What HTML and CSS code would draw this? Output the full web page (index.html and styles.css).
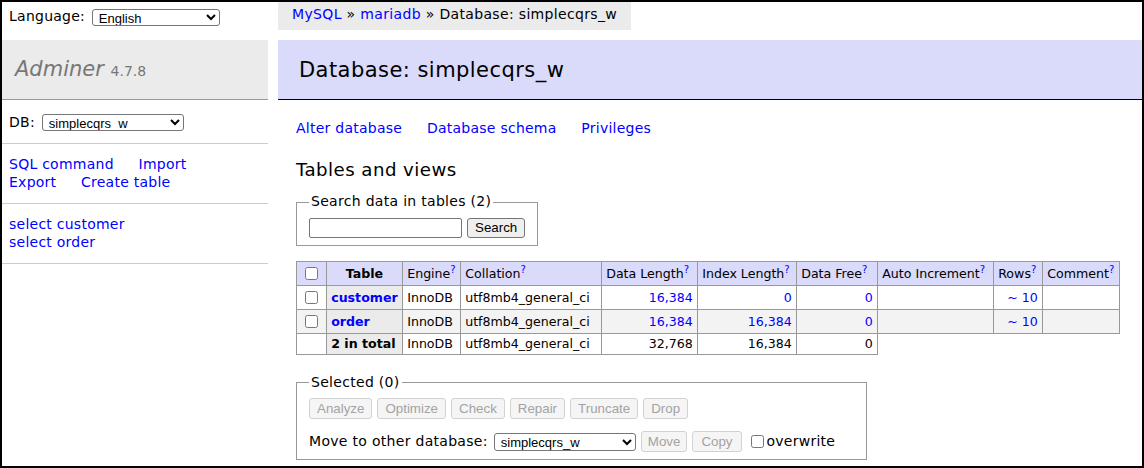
FILE: index.html
```html
<!DOCTYPE html>
<html lang="en">
<head>
<meta charset="utf-8">
<title>Database: simplecqrs_w - Adminer</title>
<link rel="stylesheet" href="styles.css">
</head>
<body>
<div class="frame">
  <aside class="menu">
    <div class="lang">Language: <select class="sel sel-lang"><option>English</option></select></div>
    <h1 class="logo"><a class="logo-name" href="#">Adminer</a> <span class="version">4.7.8</span></h1>
    <p class="menu-block dbpick">DB: <select class="sel sel-db"><option>simplecqrs_w</option></select></p>
    <p class="menu-block menu-links"><a href="#">SQL command</a> <a href="#">Import</a><br><a href="#">Export</a> <a href="#">Create table</a></p>
    <p class="menu-block menu-tables"><a href="#">select customer</a><br><a href="#">select order</a></p>
  </aside>
  <main class="main">
    <div class="breadcrumb"><a href="#">MySQL</a> » <a href="#">mariadb</a> » Database: simplecqrs_w</div>
    <h2 class="title">Database: simplecqrs_w</h2>
    <div class="content">
      <p class="links"><a href="#">Alter database</a> <a href="#">Database schema</a> <a href="#">Privileges</a></p>
      <h3 class="subtitle">Tables and views</h3>
      <fieldset class="box search">
        <legend>Search data in tables (2)</legend>
        <div class="row"><input class="txt" type="text"><button class="btn">Search</button></div>
      </fieldset>
      <table class="tables">
        <colgroup>
          <col class="c-chk"><col class="c-name"><col class="c-engine"><col class="c-coll"><col class="c-dlen"><col class="c-ilen"><col class="c-dfree"><col class="c-auto"><col class="c-rows"><col class="c-comment">
        </colgroup>
        <thead>
          <tr>
            <td><input class="chk" type="checkbox"></td>
            <th>Table</th>
            <td>Engine<a href="#"><sup>?</sup></a></td>
            <td>Collation<a href="#"><sup>?</sup></a></td>
            <td>Data Length<a href="#"><sup>?</sup></a></td>
            <td>Index Length<a href="#"><sup>?</sup></a></td>
            <td>Data Free<a href="#"><sup>?</sup></a></td>
            <td>Auto Increment<a href="#"><sup>?</sup></a></td>
            <td>Rows<a href="#"><sup>?</sup></a></td>
            <td>Comment<a href="#"><sup>?</sup></a></td>
          </tr>
        </thead>
        <tbody>
          <tr>
            <td><input class="chk" type="checkbox"></td>
            <th><a href="#">customer</a></th>
            <td>InnoDB</td>
            <td>utf8mb4_general_ci</td>
            <td class="num"><a href="#">16,384</a></td>
            <td class="num"><a href="#">0</a></td>
            <td class="num"><a href="#">0</a></td>
            <td class="num"></td>
            <td class="num"><a href="#">~ 10</a></td>
            <td></td>
          </tr>
          <tr class="odd">
            <td><input class="chk" type="checkbox"></td>
            <th><a href="#">order</a></th>
            <td>InnoDB</td>
            <td>utf8mb4_general_ci</td>
            <td class="num"><a href="#">16,384</a></td>
            <td class="num"><a href="#">16,384</a></td>
            <td class="num"><a href="#">0</a></td>
            <td class="num"></td>
            <td class="num"><a href="#">~ 10</a></td>
            <td></td>
          </tr>
          <tr class="total">
            <td></td>
            <th>2 in total</th>
            <td>InnoDB</td>
            <td>utf8mb4_general_ci</td>
            <td class="num">32,768</td>
            <td class="num">16,384</td>
            <td class="num">0</td>
          </tr>
        </tbody>
      </table>
      <fieldset class="box selected">
        <legend>Selected (0)</legend>
        <div class="row btnrow">
          <button class="btn btn-dis" disabled>Analyze</button>
          <button class="btn btn-dis" disabled>Optimize</button>
          <button class="btn btn-dis" disabled>Check</button>
          <button class="btn btn-dis" disabled>Repair</button>
          <button class="btn btn-dis" disabled>Truncate</button>
          <button class="btn btn-dis" disabled>Drop</button>
        </div>
        <div class="row moverow">
          <span class="move-label">Move to other database:</span>
          <select class="sel sel-move"><option>simplecqrs_w</option></select>
          <button class="btn btn-dis" disabled>Move</button>
          <button class="btn btn-dis btn-copy" disabled>Copy</button>
          <label class="ow"><input class="chk chk-ow" type="checkbox">overwrite</label>
        </div>
      </fieldset>
    </div>
  </main>
</div>
</body>
</html>
```
FILE: styles.css
```css
* { box-sizing: border-box; }
html, body { margin: 0; padding: 0; background: #fff; }
body {
  font: 14px/17.5px "DejaVu Sans", Verdana, sans-serif;
  letter-spacing: 0.25px;
  color: #000;
}
a { color: #0000ff; text-decoration: none; }

.frame {
  width: 1144px;
  height: 468px;
  border: 2px solid #000;
  display: flex;
  overflow: hidden;
}

/* ---------- left menu ---------- */
.menu { width: 266px; flex: none; }
.lang {
  height: 38px;
  padding: 2px 7px 0;
  line-height: 25px;
}
.sel {
  font: 13px "Liberation Sans", Arial, sans-serif;
  color: #000;
  height: 17px;
  padding: 0 0 0 2px;
  border: 1px solid #767676;
  border-radius: 3px;
  background: #fff;
  vertical-align: middle;
}
.sel-lang { width: 128px; margin-left: 2px; }
.sel-db { width: 142px; margin-left: 7px; }

.logo {
  margin: 0;
  height: 60px;
  padding: 16px 13px 0;
  font-size: 21px;
  line-height: 26px;
  font-weight: normal;
  letter-spacing: 0;
  color: #777;
  background: #ebebeb;
  border-bottom: 1px solid #999;
}
.logo-name { color: #777; font-style: italic; }
.version { font-size: 14px; color: #777; }

.menu-block {
  margin: 0;
  padding: 12px 7px;
  border-bottom: 1px solid #ccc;
}
.dbpick {
  height: 44px;
  padding: 2px 7px 0;
  display: flex;
  align-items: center;
}
.menu-links a { margin-right: 20px; }

/* ---------- main ---------- */
.main { flex: 1; min-width: 0; margin-left: 10px; }
.breadcrumb {
  width: fit-content;
  height: 28px;
  line-height: 25px;
  padding: 0 14px;
  background: #ebebeb;
  white-space: nowrap;
  letter-spacing: 0.34px;
}
.title {
  margin: 10px 0 20px;
  height: 60px;
  padding: 16.5px 21px 0;
  font-size: 21px;
  line-height: 26px;
  font-weight: normal;
  letter-spacing: 0.45px;
  background: #dadafa;
  border-bottom: 1px solid #000;
}
.content { padding-left: 18px; }
.links { margin: 0; }
.links a { margin-right: 20px; }
.subtitle {
  margin: 21px 0 0;
  font-size: 18.2px;
  line-height: 22.75px;
  font-weight: normal;
  letter-spacing: 0.44px;
}

.box {
  margin: 12px 0 0;
  padding: 7px 12px;
  border: 1px solid #999;
  min-width: 0;
}
.box legend { padding: 0 2px; letter-spacing: 0.3px; }
.search { width: fit-content; }
.row { display: flex; align-items: center; gap: 5px; }

.txt {
  width: 153px;
  height: 20px;
  padding: 1px 2px;
  border: 1px solid #767676;
  border-radius: 2px;
  font: 13px "Liberation Sans", Arial, sans-serif;
}
.btn {
  height: 20px;
  padding: 0 7px;
  font: 13.33px "Liberation Sans", Arial, sans-serif;
  color: #000;
  background: #efefef;
  border: 1px solid #767676;
  border-radius: 3px;
}
.btn-dis {
  height: 21px;
  color: #a3a3a3;
  background: #f5f5f5;
  border-color: #d2d2d2;
}

/* ---------- table ---------- */
.tables {
  border-collapse: collapse;
  table-layout: fixed;
  width: 823px;
  margin-top: 15px;
  font-size: 12.6px;
  line-height: 15px;
  letter-spacing: 0;
}
.c-chk { width: 30px; }
.c-name { width: 76px; }
.c-engine { width: 58px; }
.c-coll { width: 141px; }
.c-dlen { width: 96px; }
.c-ilen { width: 99px; }
.c-dfree { width: 81px; }
.c-auto { width: 116px; }
.c-rows { width: 49px; }
.c-comment { width: 77px; }
.tables td, .tables th {
  border: 1px solid #999;
  padding: 2.5px 4.2px;
  white-space: nowrap;
  text-align: left;
  font-weight: normal;
  overflow: hidden;
}
.tables thead td, .tables thead th { background: #dadafa; }
.tables thead th { text-align: center; font-weight: bold; }
.tables tbody th { background: #ebebeb; font-weight: bold; }
.tables tbody tr.odd td { background: #f3f3f3; }
.tables td.num { text-align: right; }
.tables sup { font-size: 10px; line-height: 0; }
.chk {
  width: 13px;
  height: 13px;
  margin: 2.5px 3px 2.5px 4px;
  vertical-align: middle;
}

/* ---------- selected ---------- */
.selected { width: 571px; margin-top: 19px; }
.moverow { margin-top: 12px; gap: 0; }
.move-label { margin-right: 6px; letter-spacing: 0.3px; }
.sel-move { width: 142px; height: 18px; margin-right: 5px; }
.moverow .btn { margin-right: 5px; padding: 0 6px; }
.moverow .btn-copy { padding: 0 8px; }
.ow { display: flex; align-items: center; margin-left: 4px; }
.chk-ow { margin: 0 3px 0 0; }
```
